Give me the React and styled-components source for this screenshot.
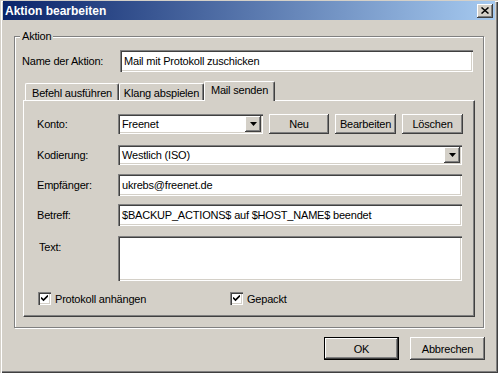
import React from "react";
import styled, { createGlobalStyle } from "styled-components";

const face = "#d4d0c8";
const shadow = "#808080";
const dark = "#404040";
const light = "#ffffff";

const GlobalStyle = createGlobalStyle`
  html, body {
    margin: 0;
    padding: 0;
    background: ${face};
  }
  body {
    font-family: "Liberation Sans", Arial, sans-serif;
    font-size: 11px;
    letter-spacing: -0.2px;
    color: #000;
  }
`;

const Window = styled.div`
  width: 498px;
  height: 373px;
  box-sizing: border-box;
  background: ${face};
  padding: 1px 3px 3px 3px;
  box-shadow: inset 1px 1px 0 ${face}, inset 2px 2px 0 ${light},
    inset -1px -1px 0 ${dark}, inset -2px -2px 0 ${shadow};
  display: flex;
  flex-direction: column;
`;

const TitleBar = styled.div`
  height: 19px;
  flex: none;
  display: flex;
  align-items: center;
  justify-content: space-between;
  padding: 0 2px 0 2px;
  background: linear-gradient(to right, #0a246a, #a6caf0);
`;

const TitleText = styled.span`
  color: #fff;
  font-weight: bold;
  font-size: 12px;
  letter-spacing: 0;
`;

const raised = `
  box-shadow: inset -1px -1px 0 ${dark}, inset 1px 1px 0 ${light},
    inset -2px -2px 0 ${shadow};
`;

const sunken = `
  box-shadow: inset 1px 1px 0 ${shadow}, inset 2px 2px 0 ${dark},
    inset -1px -1px 0 ${light}, inset -2px -2px 0 ${face};
`;

const CloseButton = styled.div`
  width: 16px;
  height: 14px;
  background: ${face};
  ${raised}
  display: flex;
  align-items: center;
  justify-content: center;
`;

const Body = styled.div`
  flex: 1;
  display: flex;
  flex-direction: column;
  padding: 10px 10px 0 11px;
`;

const GroupBox = styled.fieldset`
  margin: 0;
  padding: 0 10px 0 7px;
  height: 298px;
  box-sizing: border-box;
  border: 1px solid ${shadow};
  box-shadow: inset 1px 1px 0 ${light}, 1px 1px 0 ${light};
  width: 470px;
  min-width: 0;
`;

const Legend = styled.legend`
  margin-left: -2px;
  padding: 0 2px;
  line-height: 13px;
  background: ${face};
`;

const NameRow = styled.div`
  display: flex;
  align-items: center;
  margin-top: 7px;
`;

const NameLabel = styled.span`
  width: 98px;
  flex: none;
`;

const TextField = styled.div`
  flex: 1;
  height: ${(p) => p.$h || 22}px;
  box-sizing: border-box;
  background: #fff;
  ${sunken}
  padding: ${(p) => (p.$multi ? "3px 4px" : "0 4px")};
  display: flex;
  align-items: ${(p) => (p.$multi ? "flex-start" : "center")};
  white-space: nowrap;
  overflow: hidden;
`;

const Tabs = styled.div`
  margin: 9px -2px 0 1px;
  display: flex;
  flex-direction: column;
`;

const TabStrip = styled.div`
  display: flex;
  align-items: flex-end;
  height: 20px;
  padding-left: 2px;
  position: relative;
  z-index: 1;
  margin-bottom: -1px;
`;

const Tab = styled.div`
  box-sizing: border-box;
  width: ${(p) => p.$w}px;
  height: ${(p) => (p.$active ? 20 : 17)}px;
  padding-top: ${(p) => (p.$active ? 2 : 1)}px;
  margin-bottom: ${(p) => (p.$active ? 0 : 1)}px;
  background: ${face};
  border-radius: 2px 2px 0 0;
  border-top: 1px solid ${light};
  border-left: 1px solid ${light};
  border-right: 1px solid ${dark};
  box-shadow: inset -1px 0 0 ${shadow};
  display: flex;
  justify-content: center;
  align-items: ${(p) => (p.$active ? "flex-start" : "center")};
  white-space: nowrap;
`;

const TabPanel = styled.div`
  height: 217px;
  box-sizing: border-box;
  background: ${face};
  border-top: 1px solid ${light};
  border-left: 1px solid ${light};
  border-right: 1px solid ${dark};
  border-bottom: 1px solid ${dark};
  box-shadow: inset -1px -1px 0 ${shadow};
  padding: 13px 12px 0 13px;
  display: flex;
  flex-direction: column;
`;

const FormRow = styled.div`
  display: flex;
  align-items: ${(p) => (p.$top ? "flex-start" : "center")};
  margin-top: ${(p) => p.$gap || 0}px;
`;

const FieldLabel = styled.span`
  width: 81px;
  flex: none;
  padding-top: ${(p) => (p.$top ? 5 : 0)}px;
  padding-left: ${(p) => (p.$top ? 2 : 0)}px;
  box-sizing: border-box;
`;

const Combo = styled.div`
  width: ${(p) => (p.$w ? p.$w + "px" : "auto")};
  flex: ${(p) => (p.$w ? "none" : 1)};
  height: 20px;
  box-sizing: border-box;
  background: #fff;
  ${sunken}
  padding: 2px 2px 2px 4px;
  display: flex;
  align-items: center;
  justify-content: space-between;
`;

const DropButton = styled.div`
  width: 16px;
  height: 16px;
  background: ${face};
  ${raised}
  display: flex;
  align-items: center;
  justify-content: center;
`;

const Button = styled.div`
  width: ${(p) => p.$w || 60}px;
  height: ${(p) => p.$h || 20}px;
  box-sizing: border-box;
  background: ${face};
  ${raised}
  display: flex;
  align-items: center;
  justify-content: center;
  margin-left: ${(p) => p.$ml || 0}px;
  flex: none;
`;

const DefaultButton = styled(Button)`
  border: 1px solid #000;
`;

const CheckRow = styled.div`
  display: flex;
  align-items: center;
  margin-top: 11px;
  padding-left: 1px;
`;

const CheckItem = styled.label`
  display: flex;
  align-items: center;
  width: ${(p) => p.$w || "auto"};
`;

const CheckBox = styled.span`
  width: 13px;
  height: 13px;
  box-sizing: border-box;
  background: #fff;
  ${sunken}
  display: flex;
  align-items: center;
  justify-content: center;
  margin-right: 4px;
`;

const Footer = styled.div`
  display: flex;
  justify-content: flex-end;
  margin-top: 9px;
`;

const Arrow = () => (
  <svg width="7" height="4" viewBox="0 0 7 4">
    <path d="M0 0h7L3.5 4z" fill="#000" />
  </svg>
);

const Check = () => (
  <svg width="7" height="7" viewBox="0 0 7 7">
    <path d="M0 2.5l2.5 2.5L7 0.5" stroke="#000" strokeWidth="1.6" fill="none" />
  </svg>
);

const CloseX = () => (
  <svg width="8" height="7" viewBox="0 0 8 7">
    <path d="M0.5 0.5l7 6M7.5 0.5l-7 6" stroke="#000" strokeWidth="1.5" />
  </svg>
);

export default function App() {
  return (
    <>
      <GlobalStyle />
      <Window>
        <TitleBar>
          <TitleText>Aktion bearbeiten</TitleText>
          <CloseButton>
            <CloseX />
          </CloseButton>
        </TitleBar>
        <Body>
          <GroupBox>
            <Legend>Aktion</Legend>
            <NameRow>
              <NameLabel>Name der Aktion:</NameLabel>
              <TextField>Mail mit Protokoll zuschicken</TextField>
            </NameRow>
            <Tabs>
              <TabStrip>
                <Tab $w={94}>Befehl ausführen</Tab>
                <Tab $w={85}>Klang abspielen</Tab>
                <Tab $w={71} $active>Mail senden</Tab>
              </TabStrip>
              <TabPanel>
                <FormRow>
                  <FieldLabel>Konto:</FieldLabel>
                  <Combo $w={145}>
                    <span>Freenet</span>
                    <DropButton>
                      <Arrow />
                    </DropButton>
                  </Combo>
                  <Button $ml={6}>Neu</Button>
                  <Button $ml={6} $w={61}>Bearbeiten</Button>
                  <Button $ml={6} $w={61}>Löschen</Button>
                </FormRow>
                <FormRow $gap={11}>
                  <FieldLabel>Kodierung:</FieldLabel>
                  <Combo>
                    <span>Westlich (ISO)</span>
                    <DropButton>
                      <Arrow />
                    </DropButton>
                  </Combo>
                </FormRow>
                <FormRow $gap={9}>
                  <FieldLabel>Empfänger:</FieldLabel>
                  <TextField>ukrebs@freenet.de</TextField>
                </FormRow>
                <FormRow $gap={8}>
                  <FieldLabel>Betreff:</FieldLabel>
                  <TextField>$BACKUP_ACTIONS$ auf $HOST_NAME$ beendet</TextField>
                </FormRow>
                <FormRow $gap={10} $top>
                  <FieldLabel $top>Text:</FieldLabel>
                  <TextField $h={45} $multi />
                </FormRow>
                <CheckRow>
                  <CheckItem $w="192px">
                    <CheckBox>
                      <Check />
                    </CheckBox>
                    Protokoll anhängen
                  </CheckItem>
                  <CheckItem>
                    <CheckBox>
                      <Check />
                    </CheckBox>
                    Gepackt
                  </CheckItem>
                </CheckRow>
              </TabPanel>
            </Tabs>
          </GroupBox>
          <Footer>
            <DefaultButton $w={75} $h={23}>OK</DefaultButton>
            <Button $w={75} $h={23} $ml={11}>Abbrechen</Button>
          </Footer>
        </Body>
      </Window>
    </>
  );
}
